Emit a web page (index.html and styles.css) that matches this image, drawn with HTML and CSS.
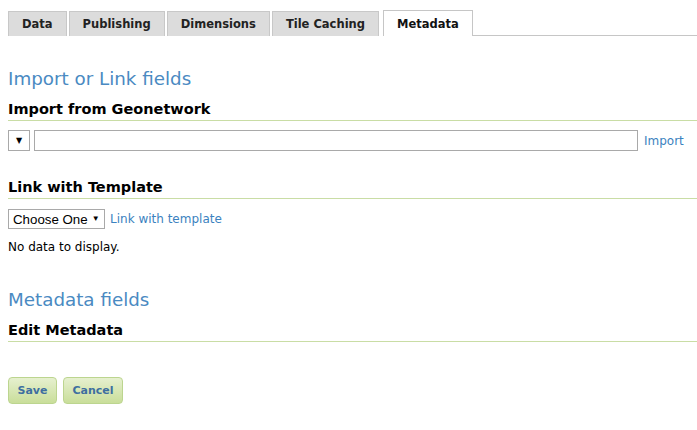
FILE: index.html
```html
<!DOCTYPE html>
<html>
<head>
<meta charset="utf-8">
<link rel="stylesheet" href="styles.css">
</head>
<body>
<div class="page">
  <ul class="tabs">
    <li class="tab">Data</li>
    <li class="tab">Publishing</li>
    <li class="tab">Dimensions</li>
    <li class="tab">Tile Caching</li>
    <li class="tab active">Metadata</li>
    <li class="tab-fill"></li>
  </ul>

  <h2 class="section-title first">Import or Link fields</h2>
  <h3 class="sub-title">Import from Geonetwork</h3>
  <div class="row import-row">
    <span class="select small"><span class="arrow">▼</span></span>
    <span class="text-input"></span>
    <a class="link">Import</a>
  </div>

  <h3 class="sub-title link-title">Link with Template</h3>
  <div class="row template-row">
    <span class="select choose">Choose One <span class="arrow">▼</span></span>
    <a class="link">Link with template</a>
  </div>
  <p class="empty">No data to display.</p>

  <h2 class="section-title second">Metadata fields</h2>
  <h3 class="sub-title">Edit Metadata</h3>

  <div class="buttons">
    <button class="btn">Save</button>
    <button class="btn">Cancel</button>
  </div>
</div>
</body>
</html>
```

FILE: styles.css
```css
html, body {
  margin: 0;
  padding: 0;
  background: #fff;
}
body {
  font-family: "DejaVu Sans", Verdana, sans-serif;
  font-size: 12px;
  color: #000;
}
.page {
  padding: 10px 0 0 8px;
}
.tabs {
  list-style: none;
  margin: 0;
  padding: 0;
  display: flex;
  align-items: flex-end;
  gap: 2px;
}
.tab {
  box-sizing: border-box;
  height: 25px;
  padding: 0 13px;
  display: flex;
  align-items: center;
  font-weight: bold;
  font-size: 11.5px;
  color: #222;
  background: #dcdcdc;
  border: 1px solid #c8c8c8;
  border-bottom: none;
}
.tab.active {
  background: #fff;
  height: 26px;
  color: #111;
  border-color: #c6c6c6;
  margin-left: 2px;
}
.tab-fill {
  flex: 1;
  border-bottom: 1px solid #c6c6c6;
  margin-left: -2px;
}
.section-title {
  font-size: 18.3px;
  font-weight: normal;
  color: #4a8ac2;
  margin: 0;
  line-height: 24px;
}
.section-title.first {
  margin-top: 31px;
}
.section-title.second {
  margin-top: 34px;
}
.sub-title {
  font-size: 14.5px;
  font-weight: bold;
  color: #000;
  margin: 9px 0 0;
  padding-bottom: 2px;
  line-height: 18px;
  border-bottom: 1px solid #c9dda5;
}
.row {
  display: flex;
  align-items: center;
}
.import-row {
  margin-top: 9px;
  gap: 4px;
}
.select {
  box-sizing: border-box;
  border: 1px solid #a9a9a9;
  background: #fff;
  height: 21px;
  display: flex;
  align-items: center;
}
.select.small {
  width: 22px;
  justify-content: center;
}
.arrow {
  font-size: 8px;
  line-height: 1;
}
.text-input {
  box-sizing: border-box;
  width: 604px;
  height: 21px;
  border: 1px solid #a9a9a9;
}
.link {
  color: #3b82c0;
  font-size: 12px;
  margin-left: 2px;
}
.link-title {
  margin-top: 27px;
}
.template-row {
  margin-top: 10px;
  gap: 3px;
}
.select.choose {
  width: 97px;
  height: 20px;
  padding: 0 0 0 4px;
  font-family: "Liberation Sans", Arial, sans-serif;
  font-size: 13.3px;
  gap: 4px;
}
.empty {
  margin: 11px 0 0;
  font-size: 12px;
}
.buttons {
  margin-top: 35px;
  display: flex;
  gap: 6px;
}
.btn {
  box-sizing: border-box;
  height: 27px;
  padding: 0 8.5px;
  font-family: "DejaVu Sans", Verdana, sans-serif;
  font-weight: bold;
  font-size: 11px;
  color: #3e6fa0;
  border: 1px solid #bcd58f;
  border-radius: 4px;
  background: linear-gradient(#e6f0cf, #c9de9a);
}
```
